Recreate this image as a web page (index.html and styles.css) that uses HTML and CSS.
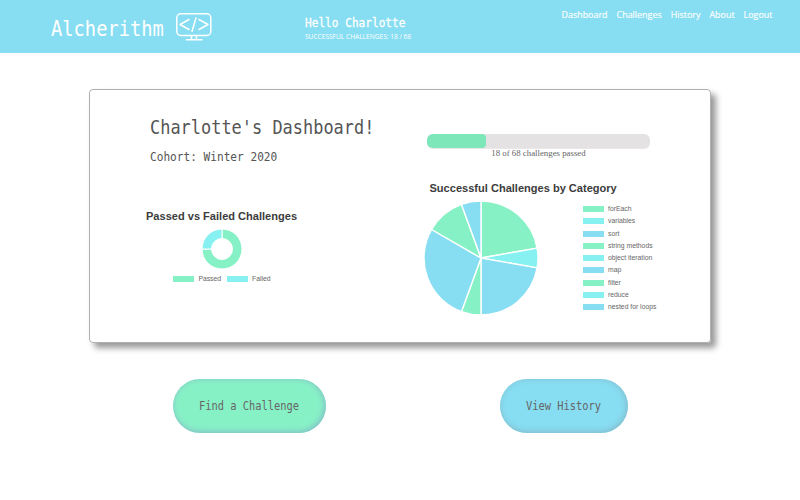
FILE: index.html
```html
<!DOCTYPE html>
<html lang="en">
<head>
<meta charset="utf-8">
<title>Alcherithm</title>
<link rel="stylesheet" href="styles.css">
</head>
<body>
<header class="header">
  <div class="brand">
    <div class="brand-name"><span class="mono">Alcherithm</span></div>
    <svg class="logo" width="38" height="30" viewBox="0 0 38 30" fill="none" stroke="#fff" stroke-width="1.5" stroke-linecap="round" stroke-linejoin="round">
      <rect x="1.8" y="1.8" width="34" height="21.6" rx="4"/>
      <path d="M14 7.5 5 12.5l9 5M24 7.5l9 5-9 5M21 6l-4 13.2M16.5 23.5v3.6M21.5 23.5v3.6M11.4 27.7h15.5"/>
    </svg>
  </div>
  <div class="greeting">
    <div class="hello"><span class="mono">Hello Charlotte</span></div>
    <div class="count">SUCCESSFUL CHALLENGES: 18 / 68</div>
  </div>
  <nav class="nav"><a>Dashboard</a><a>Challenges</a><a>History</a><a>About</a><a>Logout</a></nav>
</header>
<main>
  <section class="card">
    <div class="left">
      <h1><span class="mono">Charlotte's Dashboard!</span></h1>
      <h2><span class="mono">Cohort: Winter 2020</span></h2>
      <div class="result">
        <h3 class="result-title">Passed vs Failed Challenges</h3>
        <svg class="donut" width="40" height="40" viewBox="-20 -20 40 40" stroke="#fff" stroke-width="1">
          <path fill="#87f1c6" d="M0-20A20 20 0 1 1-20 0H-10.5A10.5 10.5 0 1 0 0-10.5Z"/>
          <path fill="#87f1f1" d="M-20 0A20 20 0 0 1 0-20V-10.5A10.5 10.5 0 0 0-10.5 0Z"/>
        </svg>
        <div class="legend-row">
          <span class="key"><i class="green"></i>Passed</span>
          <span class="key"><i class="aqua"></i>Failed</span>
        </div>
      </div>
    </div>
    <div class="right">
      <div class="progress"><div class="bar"></div></div>
      <p class="progress-text">18 of 68 challenges passed</p>
      <h3 class="category-title">Successful Challenges by Category</h3>
      <div class="category">
        <svg class="pie" width="114" height="114" viewBox="-57 -57 114 114" stroke="#fff" stroke-width="1.4" stroke-linejoin="round">
          <path fill="#87f1c6" d="M0 0V-57A57 57 0 0 1 56.13-9.9Z"/>
          <path fill="#87f1f1" d="M0 0 56.13-9.9A57 57 0 0 1 56.13 9.9Z"/>
          <path fill="#87ddf1" d="M0 0 56.13 9.9A57 57 0 0 1 0 57Z"/>
          <path fill="#87f1c6" d="M0 0V57A57 57 0 0 1-19.5 53.56Z"/>
          <path fill="#87ddf1" d="M0 0-19.5 53.56A57 57 0 0 1-49.36-28.5Z"/>
          <path fill="#87f1c6" d="M0 0-49.36-28.5A57 57 0 0 1-19.5-53.56Z"/>
          <path fill="#87ddf1" d="M0 0-19.5-53.56A57 57 0 0 1 0-57Z"/>
        </svg>
        <div class="legend">
          <span class="key"><i class="green"></i>forEach</span>
          <span class="key"><i class="aqua"></i>variables</span>
          <span class="key"><i class="blue"></i>sort</span>
          <span class="key"><i class="green"></i>string methods</span>
          <span class="key"><i class="aqua"></i>object iteration</span>
          <span class="key"><i class="blue"></i>map</span>
          <span class="key"><i class="green"></i>filter</span>
          <span class="key"><i class="aqua"></i>reduce</span>
          <span class="key"><i class="blue"></i>nested for loops</span>
        </div>
      </div>
    </div>
  </section>
  <div class="actions">
    <button class="action find"><span class="mono">Find a Challenge</span></button>
    <button class="action view"><span class="mono">View History</span></button>
  </div>
</main>
</body>
</html>
```
FILE: styles.css
```css
* { box-sizing: border-box; }
body { margin: 0; background: #fff; color: #555; font-family: "Open Sans", sans-serif; }
h1, h2, h3, p { margin: 0; font-weight: normal; white-space: nowrap; }
.mono { display: inline-block; transform: scaleX(.88); transform-origin: 0 50%; font-family: "DejaVu Sans Mono", monospace; white-space: nowrap; }

.header { display: flex; height: 53px; background: #87ddf1; color: #fff; }
.brand { display: flex; width: 305px; padding-left: 51px; }
.brand-name { width: 124px; padding-top: 15px; font-size: 21.3px; line-height: 26px; }
.logo { margin-top: 12px; }
.greeting { width: 256.5px; padding-top: 14px; white-space: nowrap; }
.hello { height: 17px; font-size: 12.65px; line-height: 17px; -webkit-text-stroke: .3px #fff; }
.count { font-size: 6.6px; line-height: 11px; }
.nav { display: flex; gap: 9px; padding-top: 9px; font-size: 8.93px; line-height: 12px; -webkit-text-stroke: .15px #fff; }

.card { display: flex; width: 622px; height: 254px; margin: 36px 0 0 89px; border: 1px solid #b0b0b0; border-radius: 4px; box-shadow: 5px 5px 6px #999; }
.left { width: 337px; padding: 24px 0 0 60px; }
h1 { font-size: 19.25px; line-height: 26px; height: 26px; }
h2 { margin-top: 7px; font-size: 12.65px; line-height: 18px; height: 18px; }
.result { display: flex; flex-direction: column; align-items: center; width: 151px; margin: 44px 0 0 -4px; }
h3 { font-family: "Liberation Sans", sans-serif; font-weight: bold; color: #3c3c3c; line-height: 14px; }
.result-title { font-size: 11.05px; }
.donut { margin-top: 6px; }
.legend-row { display: flex; gap: 6px; margin: 4px 0 0 1px; }
.key { display: flex; align-items: center; font: 6.8px/12px "Liberation Sans", sans-serif; color: #666; white-space: nowrap; }
.key i { width: 21px; height: 6px; margin-right: 4px; }
.green { background: #87f1c6; }
.aqua { background: #87f1f1; }
.blue { background: #87ddf1; }
.right { padding-top: 44px; }
.progress { width: 223px; height: 15px; border-radius: 6px; background: #e4e2e3; border: 1px solid #e9e7e8; border-width: 0 0 1px; overflow: hidden; }
.bar { width: 59px; height: 14px; border-radius: 4px; background: #7de7b9; }
.progress-text { width: 223px; margin-top: -1px; font: 8.8px/10px "Liberation Serif", serif; color: #666; text-align: center; }
.category-title { margin: 23px 0 0 2.5px; font-size: 11.05px; }
.category { display: flex; margin: 6px 0 0 -3px; }
.legend { display: grid; grid-auto-rows: 12.25px; margin: 2px 0 0 45px; }

.actions { display: flex; margin: 36px 0 0 172.5px; }
.action { height: 54px; padding: 0; border: 0; border-radius: 27px; font-size: 11.8px; color: #666; text-align: left; box-shadow: inset -1px -1px 6px #83b7c8; }
.find { width: 153px; padding-left: 26.5px; background: #87f1c6; }
.view { width: 128px; margin-left: 174px; padding-left: 26.5px; background: #87ddf1; }
```
